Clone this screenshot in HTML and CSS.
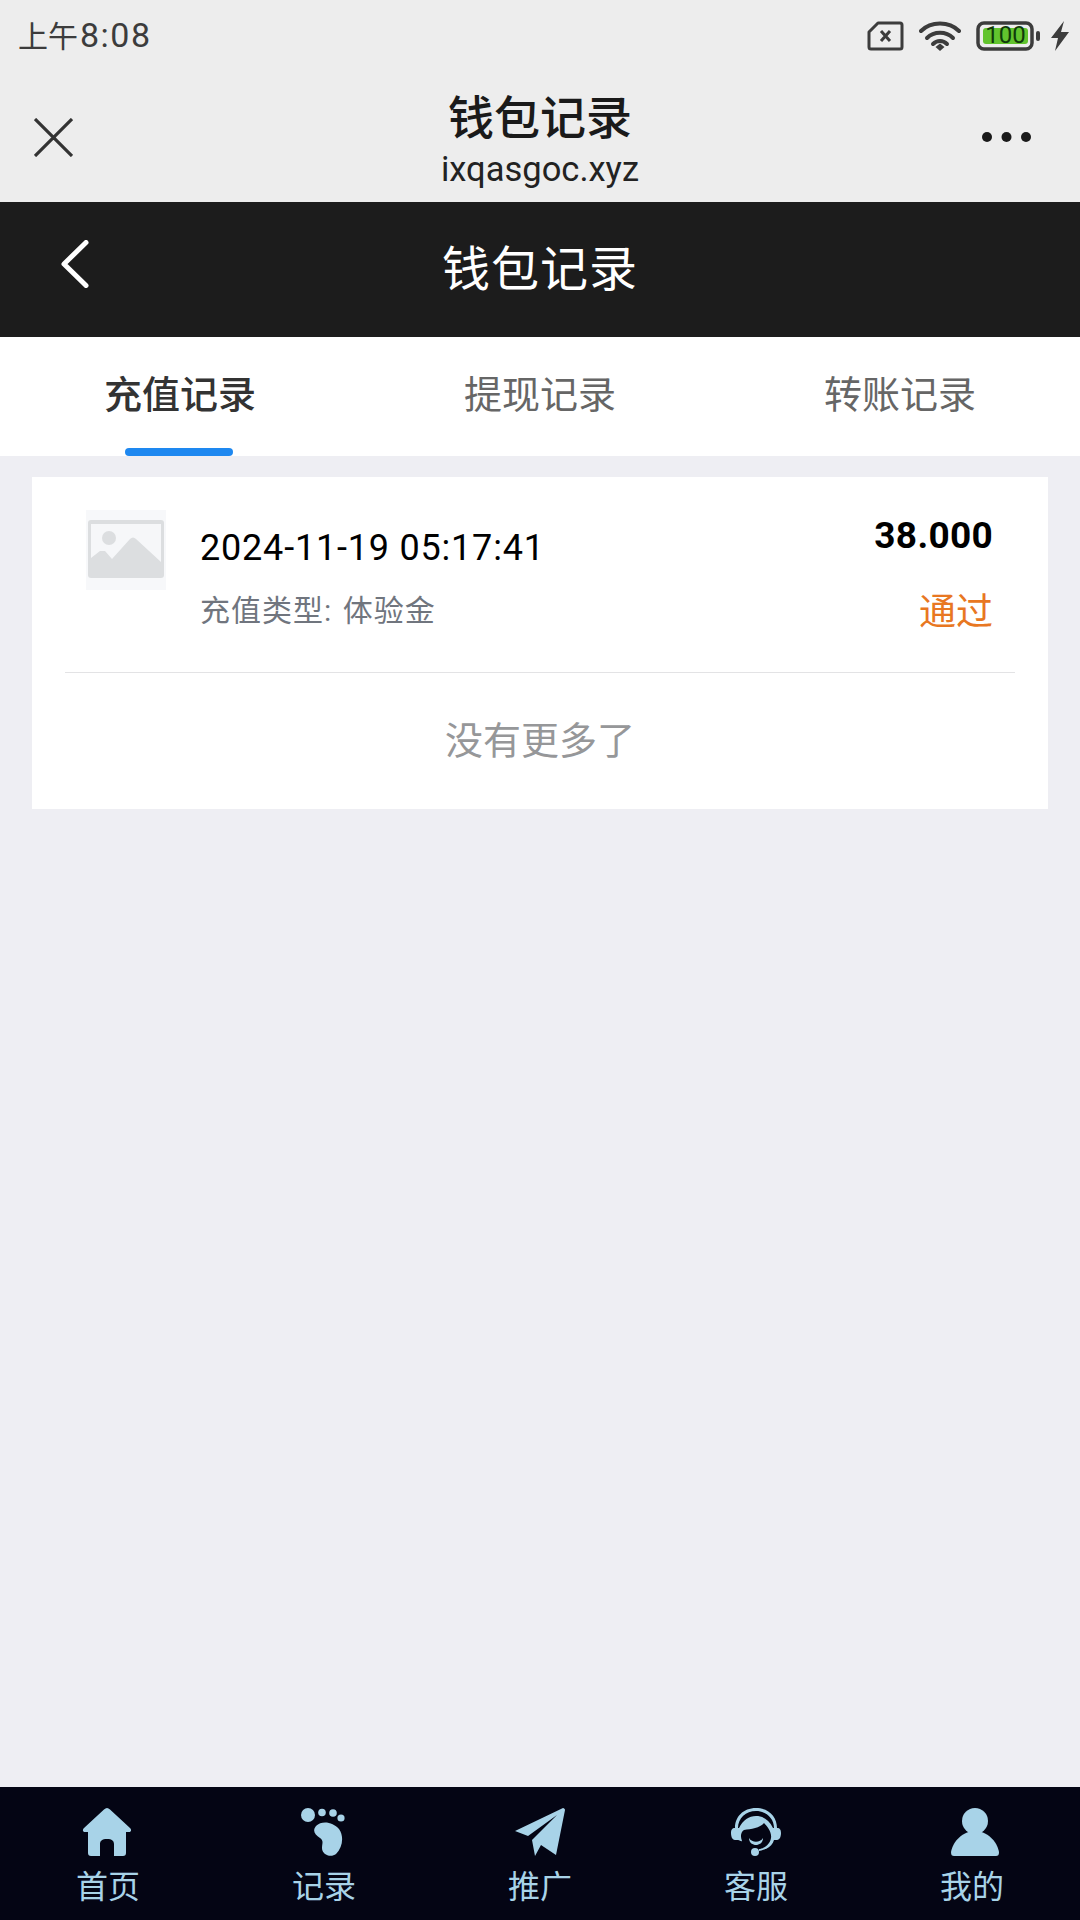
FILE: index.html
```html
<!DOCTYPE html>
<html lang="zh-CN">
<head>
<meta charset="utf-8" />
<title>钱包记录</title>
<link rel="stylesheet" href="styles.css">
</head>
<body>
<div class="page">
	<!-- 系统状态栏 -->
	<div class="status">
		<span class="time">上午<b>8:08</b></span>
		<div class="status-icons">
			<svg width="37" height="30" viewBox="0 0 37 30"><path d="M11 2H33a2 2 0 0 1 2 2V26a2 2 0 0 1-2 2H4a2 2 0 0 1-2-2V11Z" fill="none" stroke="#3c3c3c" stroke-width="3" stroke-linejoin="round"/><path d="M14 10l9 10M23 10l-9 10" stroke="#3c3c3c" stroke-width="3"/></svg>
			<svg width="42" height="32" viewBox="0 0 42 32"><g fill="none" stroke="#3c3c3c" stroke-width="4" stroke-linecap="round"><path d="M2 11C12 1 30 1 40 11"/><path d="M8 18C15 11 27 11 34 18"/><path d="M14 24C18 20 24 20 28 24"/></g><path d="M16.500 27L21 23.500 25.500 27 21 31Z" fill="#3c3c3c"/></svg>
			<svg class="battery" width="65" height="30" viewBox="0 0 65 30"><rect x="2" y="2" width="54" height="26" rx="6" fill="none" stroke="#3c3c3c" stroke-width="3.500"/><rect x="7" y="7" width="45" height="16" rx="3" fill="#62c42e"/><rect x="60" y="10" width="4" height="10" rx="2" fill="#3c3c3c"/><text x="29.500" y="22" text-anchor="middle" class="battery-num">100</text></svg>
			<svg width="19" height="30" viewBox="0 0 19 30"><path d="M14 0L1 17H8L5 30 19 11H11Z" fill="#3c3c3c"/></svg>
		</div>
	</div>

	<!-- 微信导航 -->
	<div class="wx-bar">
		<svg class="wx-close" width="39" height="39" viewBox="0 0 39 39"><path d="M1 1L38 38M38 1L1 38" stroke="#333" stroke-width="3.200"/></svg>
		<div class="wx-title">
			<div class="wx-name">钱包记录</div>
			<div class="wx-url">ixqasgoc.xyz</div>
		</div>
		<svg class="wx-more" width="49" height="10" viewBox="0 0 49 10"><circle cx="5" cy="5" r="5" fill="#1a1a1a"/><circle cx="24.500" cy="5" r="5" fill="#1a1a1a"/><circle cx="44" cy="5" r="5" fill="#1a1a1a"/></svg>
	</div>

	<div class="head">
		<svg class="back" width="28" height="48" viewBox="0 0 28 48"><path d="M25 2.500L3 24 25 45.500" fill="none" stroke="#fff" stroke-width="5" stroke-linecap="round" stroke-linejoin="round"/></svg>
		<span class="head-title">钱包记录</span>
	</div>

	<ul class="tabs">
		<li class="current">充值记录</li>
		<li>提现记录</li>
		<li>转账记录</li>
	</ul>

	<div class="main">
		<div class="card">
			<div class="record">
				<div class="thumb">
					<svg width="80" height="80" viewBox="0 0 80 80">
						<rect x="2" y="10" width="76" height="58" rx="3" fill="#dcdee0"/>
						<rect x="5" y="14" width="70" height="50" fill="#f6f7f9"/>
						<path d="M5 48L14 41 19 41 26 49 44 29C46 27 48 27 50 29L75 52V64H5Z" fill="#dcdee0"/>
						<circle cx="23" cy="28" r="7" fill="#dcdee0"/>
					</svg>
				</div>
				<div class="info">
					<div class="date">2024-11-19 05:17:41</div>
					<div class="type">充值类型: 体验金</div>
				</div>
				<div class="side">
					<div class="amount">38.000</div>
					<div class="state">通过</div>
				</div>
			</div>
			<div class="nomore">没有更多了</div>
		</div>
	</div>

	<!-- 底部导航 -->
	<ul class="nav">
		<li>
			<svg class="ico-home" width="50" height="48" viewBox="0 0 50 48"><path d="M25 0C26 0 27 .5 28 1.500L48 20C50 22 49 24 47 24H44V45C44 47 43 48 41 48H32V36C32 33 30 31 25 31S18 33 18 36V48H9C7 48 6 47 6 45V24H3C1 24 0 22 2 20L22 1.500C23 .5 24 0 25 0Z" fill="#a8d3e8"/></svg>
			<span>首页</span>
		</li>
		<li>
			<svg width="46" height="48" viewBox="0 0 46 48"><g fill="#a8d3e8"><circle cx="7" cy="7" r="7"/><circle cx="21" cy="4.500" r="3.800"/><circle cx="32" cy="5" r="3.800"/><circle cx="40" cy="10" r="3.600"/><path d="M15 18C21 12 32 14 38 21 43 28 42 39 35 46 30 50 21 47 21 40 21 35 23 33 19 30 14 27 11 23 15 18Z"/></g></svg>
			<span>记录</span>
		</li>
		<li>
			<svg width="50" height="48" viewBox="0 0 50 48"><g fill="#a8d3e8"><path d="M48 0C49 0 50 1 50 2L41 47 26 37 20 48 17 32 42 7 13 28 0 23Z"/></g></svg>
			<span>推广</span>
		</li>
		<li>
			<svg width="50" height="48" viewBox="0 0 50 48"><g fill="#a8d3e8"><path d="M25 0C38 0 46 9 46 20H43C43 10 35 3 25 3S7 10 7 20H4C4 9 12 0 25 0Z"/><path d="M4 20H8C12 12 18 8 25 8S38 12 42 20H46C49 20 50 22 50 25S49 32 46 32H43C42 36 39 39 35 41 34 41 30 43 28 43V41C32 41 39 37 40 30 41 24 36 18 33 15 29 20 20 21 13 22 10 24 9 28 11 33 10 34 9 32 7 32H4C1 32 0 28 0 25S1 20 4 20Z"/><path d="M18 30C21 35 29 35 32 30 32 35 28 37 25 37S18 35 18 30Z"/><circle cx="24" cy="44" r="4"/></g></svg>
			<span>客服</span>
		</li>
		<li>
			<svg width="54" height="48" viewBox="-6 0 54 48"><g fill="#a8d3e8"><circle cx="24" cy="13" r="13"/><path d="M24 23C36 23 46 33 48 44 48 47 47 48 45 48H3C1 48 0 47 0 44 2 33 12 23 24 23Z"/></g></svg>
			<span>我的</span>
		</li>
	</ul>
</div>
</body>
</html>
```

FILE: styles.css
```css
body,div,ul,li{margin:0;padding:0;}
ul{list-style-type:none;}
body{background:#eeeef3;font-family:Roboto,"Noto Sans CJK SC",sans-serif;}
svg{display:block;}

.page{width:1080px;height:1920px;display:flex;flex-direction:column;overflow:hidden;}

.status{height:68px;background:#ededed;display:flex;justify-content:space-between;align-items:center;padding:4px 11px 0 18px;box-sizing:border-box;}
.time{font-size:30px;color:#3c3c3c;line-height:36px;}
.time b{font-size:34px;font-weight:400;letter-spacing:1.500px;margin-left:2px;}
.status-icons{display:flex;align-items:center;gap:15px;}
.status-icons .battery{margin-right:-6px;}
.battery-num{font:24px Roboto,sans-serif;fill:#0f3a0a;}

.wx-bar{height:134px;background:#ededed;display:grid;grid-template-columns:1fr auto 1fr;align-items:center;padding:0 34px;}
.wx-close{margin-top:5px;}
.wx-title{text-align:center;margin-top:8px;}
.wx-name{font-size:46px;font-weight:500;line-height:56px;color:#1a1a1a;}
.wx-url{font-size:34.500px;line-height:40px;color:#222;margin-top:3px;}
.wx-more{justify-self:end;margin:4px 15px 0 0;}

.head{height:135px;background:#1c1c1c;position:relative;display:flex;align-items:center;justify-content:center;}
.back{position:absolute;left:61px;top:38px;}
.head-title{font-size:48px;letter-spacing:1px;color:#fff;line-height:60px;}

.tabs{height:119px;background:#fff;display:grid;grid-template-columns:repeat(3,1fr);}
.tabs li{font-size:38px;line-height:117px;text-align:center;color:#666;position:relative;}
.tabs li.current{color:#333;font-weight:500;}
.tabs li.current:after{content:"";position:absolute;left:125px;bottom:0;width:108px;height:8px;border-radius:4px;background:#1e88f0;}

.main{flex:1;padding:21px 32px 0;}
.card{background:#fff;height:332px;padding:0 33px;}
.record{height:196px;border-bottom:1px solid #e3e3e5;padding:33px 21px 0;box-sizing:border-box;display:flex;}
.thumb{width:80px;height:80px;background:#f7f8fa;margin-right:34px;}
.info{flex:1;padding-top:10px;}
.date{font-size:36px;line-height:56px;letter-spacing:.8px;color:#000;}
.type{font-size:30px;line-height:40px;letter-spacing:1px;word-spacing:2px;color:#70757e;margin-top:15px;}
.side{text-align:right;padding-right:1px;}
.amount{font-size:37px;font-weight:700;line-height:44px;letter-spacing:.3px;color:#000;margin-top:4px;}
.state{font-size:37px;line-height:46px;color:#e87722;margin-top:32px;}
.nomore{font-size:38px;line-height:137px;text-align:center;color:#969799;}

.nav{height:133px;background:#040514;display:grid;grid-template-columns:repeat(5,1fr);}
.nav li{display:flex;flex-direction:column;align-items:center;padding-top:21px;}
.nav span{font-size:32px;line-height:40px;color:#a8d3e8;margin-top:11px;}
.ico-home{margin-right:3px;}
```
